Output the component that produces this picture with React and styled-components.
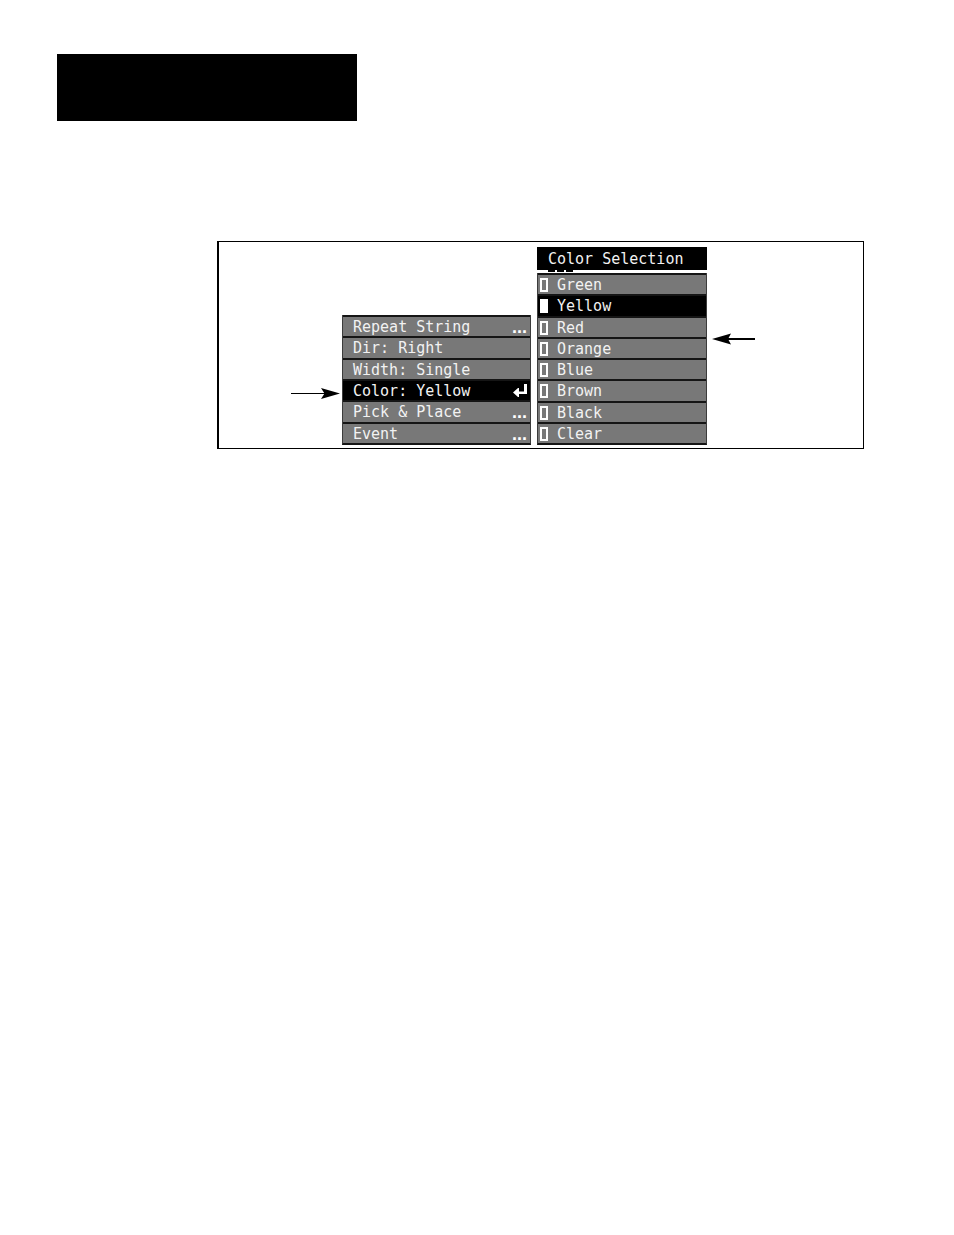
import React, { useState } from "react"
import styled, { createGlobalStyle } from "styled-components"

const theme = {
  ink: "#000000",
  paper: "#ffffff",
  row: "#787878",
  edge: "#3c3c3c",
  divider: "#151515",
  text: "#f2f2f2",
  fontMono: `"DejaVu Sans Mono", "Liberation Mono", monospace`,
}

const menuItems = [
  { label: "Repeat String", more: true },
  { label: "Dir: Right" },
  { label: "Width: Single" },
  { label: "Color: Yellow", enter: true },
  { label: "Pick & Place", more: true },
  { label: "Event", more: true },
]

const colors = [
  "Green",
  "Yellow",
  "Red",
  "Orange",
  "Blue",
  "Brown",
  "Black",
  "Clear",
]

const EnterIcon = () => (
  <svg width="14" height="14" viewBox="0 0 14 14" aria-hidden="true">
    <path d="M11 0H14V10H6V13H5L0 8.5L5 4H6V7.5H11Z" fill="#ffffff" />
  </svg>
)

const ArrowRight = () => (
  <svg width="49" height="12" viewBox="0 0 49 12" aria-hidden="true">
    <path d="M0 6.5H34" stroke="#000000" strokeWidth="1.2" />
    <path d="M49 6.5L30 1L33.5 6.5L30 12Z" fill="#000000" />
  </svg>
)

const ArrowLeft = () => (
  <svg width="44" height="12" viewBox="0 0 44 12" aria-hidden="true">
    <path d="M14 6H43" stroke="#000000" strokeWidth="2" />
    <path d="M0 6L19 0.5L16 6L19 11.5Z" fill="#000000" />
  </svg>
)

const App = () => {
  const [active, setActive] = useState("Color: Yellow")
  const [color, setColor] = useState("Yellow")

  return (
    <>
      <GlobalStyle />
      <Page>
        <Banner />
        <Figure>
          <Pointer $lift="46px">
            <ArrowRight />
          </Pointer>
          <Menu>
            {menuItems.map(({ label, more, enter }) => (
              <MenuButton
                key={label}
                type="button"
                $active={active === label}
                onClick={() => setActive(label)}
              >
                {label}
                {more && <More>...</More>}
                {enter && <EnterIcon />}
              </MenuButton>
            ))}
          </Menu>
          <Panel>
            <Title>Color Selection</Title>
            <Marks aria-hidden="true">
              <i />
              <i />
              <i />
            </Marks>
            <Options>
              {colors.map(name => (
                <Option key={name} $active={color === name}>
                  <Radio
                    type="radio"
                    name="color"
                    value={name}
                    checked={color === name}
                    onChange={() => setColor(name)}
                  />
                  {name}
                </Option>
              ))}
            </Options>
          </Panel>
          <Pointer $lift="100px">
            <ArrowLeft />
          </Pointer>
        </Figure>
      </Page>
    </>
  )
}

export default App

const GlobalStyle = createGlobalStyle`
  * {
    box-sizing: border-box;
  }

  body {
    margin: 0;
    background-color: ${theme.paper};
  }
`

const Page = styled.main`
  padding: 54px 90px 54px 57px;
`

const Banner = styled.header`
  max-width: 300px;
  height: 67px;
  background-color: ${theme.ink};
`

const Figure = styled.section`
  display: flex;
  align-items: flex-end;
  margin: 120px 0 0 160px;
  padding: 5px 0 3px 72px;
  border: 1px solid ${theme.ink};
  border-left-width: 2px;
`

const Pointer = styled.div`
  display: flex;
  flex-shrink: 0;
  margin-bottom: ${({ $lift }) => $lift};
`

const Menu = styled.nav`
  display: grid;
  grid-auto-rows: 1fr;
  flex: 0 0 189px;
  min-height: 130px;
  margin-left: 2px;
  border: 1px solid ${theme.edge};
  border-top: 0;
  border-bottom: 2px solid ${theme.divider};
`

const MenuButton = styled.button`
  display: flex;
  align-items: center;
  justify-content: space-between;
  padding: 1px 3px 0 10px;
  border: 0;
  border-top: 2px solid ${theme.divider};
  background-color: ${({ $active }) => ($active ? theme.ink : theme.row)};
  color: ${theme.text};
  font-family: ${theme.fontMono};
  font-size: 15px;
  line-height: 18px;
  text-align: left;
  cursor: pointer;
`

const More = styled.span`
  color: ${theme.paper};
  font-family: "Liberation Sans", sans-serif;
  font-size: 18px;
  font-weight: 700;
`

const Panel = styled.fieldset`
  display: flex;
  flex-direction: column;
  flex: 0 0 170px;
  min-width: 0;
  margin: 0 5px 0 6px;
  padding: 0;
  border: 0;
`

const Title = styled.h2`
  margin: 0;
  padding: 2px 11px 0;
  background-color: ${theme.ink};
  color: ${theme.text};
  font-family: ${theme.fontMono};
  font-size: 15px;
  font-weight: 400;
  line-height: 21px;
`

const Marks = styled.div`
  display: flex;
  gap: 2px;
  height: 3px;
  padding: 0 11px;

  i {
    width: 7px;
    height: 2px;
    background-color: ${theme.ink};
  }
`

const Options = styled.div`
  display: grid;
  grid-auto-rows: 1fr;
  min-height: 172px;
  border: 1px solid ${theme.edge};
  border-top: 0;
  border-bottom: 2px solid ${theme.divider};
`

const Option = styled.label`
  display: flex;
  align-items: center;
  gap: 9px;
  padding: 1px 0 0 2px;
  border-top: 2px solid ${theme.divider};
  background-color: ${({ $active }) => ($active ? theme.ink : theme.row)};
  color: ${theme.text};
  font-family: ${theme.fontMono};
  font-size: 15px;
  line-height: 18px;
  cursor: pointer;
`

const Radio = styled.input`
  appearance: none;
  width: 8px;
  height: 14px;
  margin: 0;
  border: 2px solid ${theme.paper};

  &:checked {
    background-color: ${theme.paper};
  }
`
